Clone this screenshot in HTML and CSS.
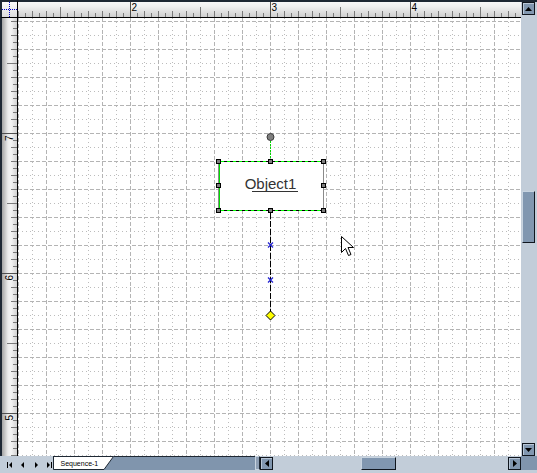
FILE: index.html
```html
<!DOCTYPE html>
<html>
<head>
<meta charset="utf-8">
<link rel="stylesheet" href="styles.css">
</head>
<body>
<div class="window">
  <div class="corner">
    <svg width="15" height="15" class="block">
      <line x1="7.5" y1="0" x2="7.5" y2="15" stroke="#0000c8" stroke-dasharray="1 1"/>
      <line x1="0" y1="7.5" x2="15" y2="7.5" stroke="#0000c8" stroke-dasharray="1 1"/>
    </svg>
  </div>
  <div class="hruler">
    <svg width="503" height="15" class="block" shape-rendering="crispEdges">
      <defs>
        <pattern id="htick" width="14" height="15" patternUnits="userSpaceOnUse">
          <rect x="0" y="9" width="1" height="6" fill="#7a7a7a"/>
          <rect x="7" y="11" width="1" height="4" fill="#7a7a7a"/>
        </pattern>
      </defs>
      <rect width="503" height="15" fill="url(#htick)"/>
      <rect x="42" y="5" width="1" height="10" fill="#7a7a7a"/>
      <rect x="182" y="5" width="1" height="10" fill="#7a7a7a"/>
      <rect x="322" y="5" width="1" height="10" fill="#7a7a7a"/>
      <rect x="462" y="5" width="1" height="10" fill="#7a7a7a"/>
      <rect x="112" y="0" width="1" height="15" fill="#505050"/>
      <rect x="252" y="0" width="1" height="15" fill="#505050"/>
      <rect x="392" y="0" width="1" height="15" fill="#505050"/>
      <text x="113.5" y="8.5" class="rlabel">2</text>
      <text x="253.5" y="8.5" class="rlabel">3</text>
      <text x="393.5" y="8.5" class="rlabel">4</text>
    </svg>
  </div>
  <div class="vscroll">
    <div class="sbtn"><svg width="7" height="4"><path d="M3.5 0 L7 4 L0 4 Z" fill="#000"/></svg></div>
    <div class="vtrack"><div class="vthumb"></div></div>
    <div class="sbtn"><svg width="7" height="4"><path d="M0 0 L7 0 L3.5 4 Z" fill="#000"/></svg></div>
  </div>
  <div class="vruler">
    <svg width="15" height="438" class="block" shape-rendering="crispEdges">
      <defs>
        <pattern id="vtick" width="15" height="14" patternUnits="userSpaceOnUse">
          <rect x="9" y="3" width="6" height="1" fill="#7a7a7a"/>
          <rect x="11" y="10" width="4" height="1" fill="#7a7a7a"/>
        </pattern>
      </defs>
      <rect width="15" height="438" fill="url(#vtick)"/>
      <rect x="5" y="45" width="10" height="1" fill="#7a7a7a"/>
      <rect x="5" y="185" width="10" height="1" fill="#7a7a7a"/>
      <rect x="5" y="325" width="10" height="1" fill="#7a7a7a"/>
      <rect x="0" y="115" width="15" height="1" fill="#505050"/>
      <rect x="0" y="255" width="15" height="1" fill="#505050"/>
      <rect x="0" y="395" width="15" height="1" fill="#505050"/>
      <text transform="translate(10.5,123) rotate(-90)" class="rlabel">7</text>
      <text transform="translate(10.5,262.5) rotate(-90)" class="rlabel">6</text>
      <text transform="translate(10.5,402.5) rotate(-90)" class="rlabel">5</text>
    </svg>
  </div>
  <div class="canvas">
    <svg width="503" height="438" class="block">
      <g fill="none" shape-rendering="crispEdges">
        <path class="grid-dot" d="M14.5 0V438M42.5 0V438M70.5 0V438M98.5 0V438M126.5 0V438M154.5 0V438M182.5 0V438M210.5 0V438M238.5 0V438M266.5 0V438M294.5 0V438M322.5 0V438M350.5 0V438M378.5 0V438M406.5 0V438M434.5 0V438M462.5 0V438M490.5 0V438"/>
        <path class="grid-dot" d="M0 17.5H503M0 45.5H503M0 73.5H503M0 101.5H503M0 129.5H503M0 157.5H503M0 185.5H503M0 213.5H503M0 241.5H503M0 269.5H503M0 297.5H503M0 325.5H503M0 353.5H503M0 381.5H503M0 409.5H503M0 437.5H503"/>
        <path class="grid-dash" d="M0.5 0V438M28.5 0V438M56.5 0V438M84.5 0V438M112.5 0V438M140.5 0V438M168.5 0V438M196.5 0V438M224.5 0V438M252.5 0V438M280.5 0V438M308.5 0V438M336.5 0V438M364.5 0V438M392.5 0V438M420.5 0V438M448.5 0V438M476.5 0V438"/>
        <path class="grid-dash" d="M0 3.5H503M0 31.5H503M0 59.5H503M0 87.5H503M0 115.5H503M0 143.5H503M0 171.5H503M0 199.5H503M0 227.5H503M0 255.5H503M0 283.5H503M0 311.5H503M0 339.5H503M0 367.5H503M0 395.5H503M0 423.5H503"/>
      </g>

      <!-- rotation handle -->
      <line x1="252.5" y1="123" x2="252.5" y2="141" stroke="#00d800" stroke-dasharray="2 1"/>
      <circle cx="252.5" cy="119" r="3.5" fill="#7f7f7f" stroke="#3a3a3a"/>

      <!-- shape -->
      <rect x="200.5" y="143.5" width="105" height="49" fill="#fff" stroke="#8a8a8a"/>
      <line x1="200" y1="143.5" x2="306" y2="143.5" stroke="#00ff00"/>
      <line x1="200" y1="143.5" x2="306" y2="143.5" stroke="#000" stroke-dasharray="3 3"/>
      <line x1="200" y1="192.5" x2="306" y2="192.5" stroke="#00ff00"/>
      <line x1="200" y1="192.5" x2="306" y2="192.5" stroke="#000" stroke-dasharray="3 3"/>
      <line x1="201.5" y1="144" x2="201.5" y2="192" stroke="#00e000"/>
      <text x="252.5" y="171" text-anchor="middle" class="shape-text">Object1</text>
      <rect x="234" y="173" width="46" height="1" fill="#333"/>

      <!-- connector -->
      <line x1="252.5" y1="195" x2="252.5" y2="294" stroke="#000" stroke-dasharray="6 2"/>
      <path d="M250 224.5 L255 229.5 M255 224.5 L250 229.5" stroke="#2020d0" stroke-width="1.2"/>
      <path d="M250 259.5 L255 264.5 M255 259.5 L250 264.5" stroke="#2020d0" stroke-width="1.2"/>
      <polygon points="252.5,293 257,297.5 252.5,302 248,297.5" fill="#ffff00" stroke="#000"/>

      <!-- handles -->
      <g fill="#7f7f7f" stroke="#000" shape-rendering="crispEdges">
        <rect x="198.5" y="141.5" width="4" height="4"/>
        <rect x="250.5" y="141.5" width="4" height="4"/>
        <rect x="303.5" y="141.5" width="4" height="4"/>
        <rect x="198.5" y="165.5" width="4" height="4"/>
        <rect x="303.5" y="165.5" width="4" height="4"/>
        <rect x="198.5" y="190.5" width="4" height="4"/>
        <rect x="250.5" y="190.5" width="4" height="4"/>
        <rect x="303.5" y="190.5" width="4" height="4"/>
      </g>

      <!-- mouse pointer -->
      <path d="M323.5 218.5 L323.5 234.5 L327.5 230.5 L330.5 237.5 L333 236.5 L330 229.5 L335.5 229.5 Z" fill="#fff" stroke="#000"/>
    </svg>
  </div>
  <div class="bottombar">
    <div class="nav">
      <svg width="51" height="14" class="block">
        <g fill="#000">
          <rect x="5" y="6" width="1" height="6"/>
          <path d="M10 6 L10 12 L7 9 Z"/>
          <path d="M22 6 L22 12 L19 9 Z"/>
          <path d="M33 6 L33 12 L36 9 Z"/>
          <path d="M45 6 L45 12 L48 9 Z"/>
          <rect x="49" y="6" width="1" height="6"/>
        </g>
      </svg>
    </div>
    <div class="tab">
      <svg width="61" height="14" class="block">
        <path d="M0 0.5 H60.5 L51 13.5 H0.5 V0" fill="#fff" stroke="#1e2834"/>
        <text x="7.5" y="10" class="tab-text">Sequence-1</text>
      </svg>
    </div>
    <div class="tabspace"></div>
    <div class="splitter"></div>
    <div class="hbtn"><svg width="4" height="7"><path d="M0 3.5 L4 0 L4 7 Z" fill="#000"/></svg></div>
    <div class="htrack"><div class="hthumb"></div></div>
    <div class="hbtn"><svg width="4" height="7"><path d="M0 0 L4 3.5 L0 7 Z" fill="#000"/></svg></div>
    <div class="grip"></div>
  </div>
  <div class="frame"></div>
</div>
</body>
</html>
```
FILE: styles.css
```css
html, body {
  margin: 0;
  padding: 0;
  background: #c2cdd9;
}

.window {
  width: 537px;
  height: 473px;
  display: grid;
  grid-template-columns: 18px 503px 16px;
  grid-template-rows: 18px 438px 14px 3px;
  background: #c2cdd9;
  overflow: hidden;
  font-family: "Liberation Sans", Arial, sans-serif;
}

.block {
  display: block;
}

.rlabel {
  font-family: "Liberation Sans", Arial, sans-serif;
  font-size: 10px;
  fill: #000;
}

.shape-text {
  font-family: "Liberation Sans", Arial, sans-serif;
  font-size: 15px;
  fill: #333;
}

.tab-text {
  font-family: "Liberation Sans", Arial, sans-serif;
  font-size: 7px;
  fill: #000;
}

.grid-dash {
  stroke: #b4b4b4;
  stroke-dasharray: 4 2;
}

.grid-dot {
  stroke: #bcbcbc;
  stroke-dasharray: 1 3;
}

.corner {
  grid-column: 1;
  grid-row: 1;
  box-sizing: border-box;
  border-top: 2px solid #1e2834;
  border-left: 2px solid #1e2834;
  border-right: 1px solid #000;
  border-bottom: 1px solid #000;
  background: linear-gradient(#fbfbfb, #dcdcdc);
}

.hruler {
  grid-column: 2;
  grid-row: 1;
  box-sizing: border-box;
  border-top: 2px solid #1e2834;
  border-bottom: 1px solid #000;
  background: linear-gradient(#f8f8f8, #f0f0f0 30%, #cfcfcf);
}

.vruler {
  grid-column: 1;
  grid-row: 2;
  box-sizing: border-box;
  border-left: 2px solid #1e2834;
  border-right: 1px solid #000;
  background: linear-gradient(to right, #a4a4a4, #ececec 40%, #f4f4f4 60%, #d2d2d2);
}

.canvas {
  grid-column: 2;
  grid-row: 2;
  background: #fff;
}

.vscroll {
  grid-column: 3;
  grid-row: 1 / span 2;
  box-sizing: border-box;
  border-top: 2px solid #1e2834;
  padding: 0 2px 0 1px;
  display: flex;
  flex-direction: column;
  background: #c2cdd9;
}

.sbtn {
  width: 13px;
  height: 13px;
  box-sizing: border-box;
  flex: none;
  background: #8197b0;
  border: 1px solid #10161e;
  box-shadow: inset 1px 1px 0 #b8c6d6;
  display: flex;
  align-items: center;
  justify-content: center;
}

.vtrack {
  flex: 1;
}

.vthumb {
  margin-top: 176px;
  height: 52px;
  box-sizing: border-box;
  background: #8197b0;
  border: 1px solid #10161e;
  border-top-color: #c8d4e0;
  border-left-color: #c8d4e0;
}

.bottombar {
  grid-column: 1 / span 3;
  grid-row: 3;
  display: flex;
}

.nav {
  width: 51px;
  margin-left: 2px;
  flex: none;
  background: #c2cdd9;
}

.tab {
  width: 61px;
  flex: none;
  background: #8095ad;
}

.tabspace {
  width: 141px;
  flex: none;
  box-sizing: border-box;
  background: #8095ad;
  border-top: 1px solid #1e2834;
}

.splitter {
  width: 5px;
  flex: none;
  box-sizing: border-box;
  background: #8e9fb4;
  border: 1px solid #c8d4e0;
  border-right-color: #1e2834;
}

.hbtn {
  width: 13px;
  height: 13px;
  margin-top: 1px;
  flex: none;
  box-sizing: border-box;
  background: #8197b0;
  border: 1px solid #10161e;
  box-shadow: inset 1px 1px 0 #b8c6d6;
  display: flex;
  align-items: center;
  justify-content: center;
}

.htrack {
  flex: 1;
  padding-top: 1px;
}

.hthumb {
  margin-left: 88px;
  width: 35px;
  height: 13px;
  box-sizing: border-box;
  background: #8197b0;
  border: 1px solid #10161e;
  border-top-color: #c8d4e0;
  border-left-color: #c8d4e0;
}

.grip {
  width: 16px;
  flex: none;
  background: #8095ad;
}

.frame {
  grid-column: 1 / span 3;
  grid-row: 4;
  background: #c2cdd9;
}
```
